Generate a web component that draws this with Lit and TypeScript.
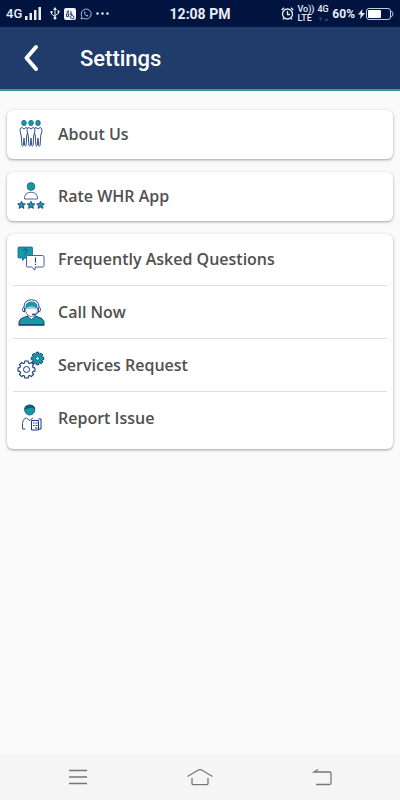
import { LitElement, html, css, svg } from "lit";
import { customElement, property } from "lit/decorators.js";

const star = (x: number) => svg`
  <path transform="translate(${x} 23)" fill="#149aa5" stroke="#14397c" stroke-width=".8" stroke-linejoin="round"
    d="M0-3.8L1.2-1.4L3.9-1.1L1.9.8L2.4 3.4L0 2.1L-2.4 3.4L-1.9.8L-3.9-1.1L-1.2-1.4Z"/>`;

const gearPath = (r: number, tooth: number) => {
  const points: string[] = [];
  for (let i = 0; i < 8; i++) {
    const base = (i * Math.PI) / 4;
    for (const [offset, radius] of [[-0.28, r], [-0.2, r + tooth], [0.2, r + tooth], [0.28, r]]) {
      points.push(`${(Math.cos(base + offset) * radius).toFixed(2)} ${(Math.sin(base + offset) * radius).toFixed(2)}`);
    }
  }
  return `M${points.join("L")}Z`;
};

const person = (x: number) => svg`
  <ellipse cx="${x}" cy="3" rx="2.3" ry="2.7" fill="#149aa5" stroke="#1b5c86" stroke-width=".7"/>
  <path transform="translate(${x} 0)" fill="#fff" stroke="#1c3f80" stroke-width=".9" stroke-linejoin="round"
    d="M-2 7.500Q-4.300 7.800-4 10.500L-2.700 16L-2.100 25.500Q-1.300 26.800-.7 25.500L0 18L.7 25.500Q1.300 26.800 2.100 25.500L2.700 16L4 10.500Q4.300 7.800 2 7.500L0 9Z"/>`;

const icons = {
  people: svg`${person(7)}${person(21)}${person(14)}`,
  rate: svg`
    <circle cx="14" cy="4.500" r="3.900" fill="#149aa5" stroke="#1b5c86" stroke-width=".7"/>
    <path d="M7.500 17V15.500Q8 10.500 14 10.200Q20 10.500 20.500 15.500V17Z" fill="#fff" stroke="#3a5590" stroke-width=".9"/>
    ${star(4.5)}${star(14)}${star(23.5)}`,
  chat: svg`
    <path d="M2 2H14.500Q15.500 2 15.500 3V12Q15.500 13 14.500 13H8L5.500 15.500V13H2Q1 13 1 12V3Q1 2 2 2Z" fill="#149aa5" stroke="#17658c" stroke-width=".8"/>
    <path d="M6.500 5.500Q6.800 4 8.300 4Q10 4 10 5.600Q10 6.600 8.400 7.300V8.300M8.400 9.500V10.500" fill="none" stroke="#174677" stroke-width="1"/>
    <path d="M10.500 10.500H25.500Q27 10.500 27 12V20.500Q27 22 25.500 22H18V25L14.500 22H10.500Q9.500 22 9.500 21V11.500Q9.500 10.500 10.500 10.500Z" fill="#fff" stroke="#34518f" stroke-width=".9"/>
    <path d="M18.500 12.500V17.500M18.500 18.800V20" stroke="#1c3f80" stroke-width="1.100"/>`,
  agent: svg`
    <path d="M2 27V23.500Q3 20 8 19L11 18L14.500 21L18 18L21 19Q26 20 27 23.500V27Z" fill="#149aa5" stroke="#14397c" stroke-width=".9"/>
    <path d="M11 17V19L14.500 21.500L18 19V17Z" fill="#fff" stroke="#14397c" stroke-width=".8"/>
    <path d="M8.500 10Q8.500 18.500 14.500 18.500Q20.500 18.500 20.500 10Z" fill="#fff" stroke="#34518f" stroke-width=".7"/>
    <path d="M8.500 10.500V8Q9 3.500 14.500 3.500Q20 3.500 20.500 8V10.500Q18 8.500 14.500 8.500Q11 8.500 8.500 10.500Z" fill="#149aa5"/>
    <path d="M7 9Q7 1.800 14.500 1.800Q22 1.800 22 9M7 9Q5.500 9.500 5.500 11.500Q5.500 14 7.500 14V9.500M22 9Q23.500 9.500 23.500 11.500Q23.500 14 21.500 14V9.500M21.500 14Q20.500 16.500 17 16.500" fill="none" stroke="#14397c" stroke-width=".9"/>
    <ellipse cx="16.500" cy="16.300" rx="1.500" ry=".9" fill="#14397c"/>
    <path d="M1.500 27H27.500" stroke="#14397c" stroke-width="1.200"/>`,
  gears: svg`
    <g transform="translate(20.500 7.500)"><path d="${gearPath(4.9, 1.5)}" fill="#149aa5" stroke="#174577" stroke-width="1"/><circle r="1.700" fill="#fff" stroke="#174577" stroke-width=".8"/></g>
    <g transform="translate(9.500 18.500)"><path d="${gearPath(6.8, 1.8)}" fill="#fff" stroke="#14397c" stroke-width="1.100" stroke-linejoin="round"/><circle r="3" fill="#fff" stroke="#14397c" stroke-width="1"/></g>`,
  report: svg`
    <circle cx="12.700" cy="6" r="5" fill="#149aa5" stroke="#174577" stroke-width=".8"/>
    <path d="M7 5.500Q7.500.7 12.700.7Q18 .7 18.500 5.500Q15 3 12.700 4Q10 5 7 5.500Z" fill="#18577f"/>
    <path d="M8.500 25H5.500V19.500Q6 14.500 9.500 14L12.500 16.500L16 14" fill="none" stroke="#34518f" stroke-width="1"/>
    <path d="M14.500 16.500H21.500V26H14.500Z M21.500 15H24V25H21.500" fill="#fff" stroke="#14397c" stroke-width="1"/>
    <path d="M16 19H17.500M18.500 19H20.500M16 21.500H17.500M18.500 21.500H20.500M18 24H20.500" stroke="#14397c" stroke-width="1"/>`,
};

type IconName = keyof typeof icons;

@customElement("settings-row")
export class SettingsRow extends LitElement {
  @property() icon: IconName = "people";
  @property() label = "";

  static styles = css`
    :host { display: flex; }
    button {
      flex: 1; display: flex; align-items: center; gap: 13px;
      border: 0; background: none; padding: 0 4px 1px; text-align: left; cursor: pointer;
      color: #505050; font: 640 16px/24px "Open Sans", sans-serif;
    }
    svg { width: 28px; height: 28px; flex: none; }
  `;

  render() {
    return html`<button type="button">
      <svg viewBox="0 0 28 28" aria-hidden="true">${icons[this.icon]}</svg>
      <span>${this.label}</span>
    </button>`;
  }
}

const groups: { icon: IconName; label: string }[][] = [
  [{ icon: "people", label: "About Us" }],
  [{ icon: "rate", label: "Rate WHR App" }],
  [
    { icon: "chat", label: "Frequently Asked Questions" },
    { icon: "agent", label: "Call Now" },
    { icon: "gears", label: "Services Request" },
    { icon: "report", label: "Report Issue" },
  ],
];

@customElement("app-root")
export class AppRoot extends LitElement {
  static styles = css`
    :host {
      display: flex; flex-direction: column; min-height: 100vh;
      background: #fafafa; font-family: Roboto, sans-serif;
    }
    * { box-sizing: border-box; }
    .status {
      display: grid; grid-template-columns: 1fr auto 1fr; align-items: center;
      height: 27px; padding: 0 6px; background: #001440; color: #e9eef8;
    }
    .side { display: flex; align-items: center; gap: 4px; }
    .right { justify-content: flex-end; gap: 3px; }
    .network { display: flex; align-items: center; gap: 3px; margin-right: 4px; font: 500 13px/16px Roboto, sans-serif; }
    .time { font: 700 14px/16px Roboto, sans-serif; }
    .battery { font: 700 12px/16px Roboto, sans-serif; }
    .power { display: flex; align-items: center; gap: 1px; }
    .stack { display: flex; flex-direction: column; font: 500 9px/9px Roboto, sans-serif; }
    .dim { color: #33456f; font-size: 6px; text-align: center; }
    svg { display: block; flex: none; }
    header {
      display: flex; align-items: center; gap: 34px; height: 64px; padding: 0 16px;
      background: #1f3c6b; border-bottom: 2px solid #45969b; color: #fff;
    }
    h1 { margin: 0; padding-top: 2px; font: 500 22px/28px Roboto, sans-serif; }
    header button, nav button { border: 0; padding: 0; background: none; color: inherit; cursor: pointer; }
    main { flex: 1; display: flex; flex-direction: column; gap: 13px; padding: 19px 7px; }
    .card {
      background: #fff; border-radius: 6px; padding: 0 6px;
      box-shadow: 0 1px 3px rgba(0, 0, 0, 0.36);
    }
    settings-row { height: 49px; }
    .list { padding-bottom: 4px; }
    .list settings-row { height: 53px; }
    .list settings-row:first-child { height: 52px; }
    .list settings-row:not(:last-child) { border-bottom: 1px solid #dfdfdf; }
    nav {
      display: grid; grid-template-columns: repeat(3, 1fr); justify-items: center; align-items: center;
      height: 46px; padding: 0 17px; background: #f5f5f5; color: #777;
    }
  `;

  render() {
    return html`
      <div class="status">
        <div class="side left">
          <span class="network">4G
            <svg width="17" height="13" viewBox="0 0 17 13" fill="currentColor"><path d="M0 9h2.500v4H0zM4.500 6H7v7H4.500zM9 3h2.500v10H9zM13.500 0H16v13h-2.500z"/></svg>
          </span>
          <svg width="10" height="13" viewBox="0 0 10 13" fill="none" stroke="currentColor"><path d="M5 2v9M1.500 5v2L5 9.500M8.500 4.500v2L5 8.500"/><path fill="currentColor" stroke="none" d="M5 0l2 3H3zM.5 4h2v2h-2zM7.500 3.500h2v2h-2z"/><circle cx="5" cy="11" r="1.500" fill="currentColor" stroke="none"/></svg>
          <svg width="12" height="12" viewBox="0 0 12 12"><rect width="12" height="12" rx="2" fill="#f2f5fb"/><path d="M4 2v3.500M2.500 4.500L5 3.500M2.500 6h2v2.500h-2zM7 3v4M5.500 6h3M6 9.500q0-2 2-2t2 2-2 1-2-1" fill="none" stroke="#30426d"/></svg>
          <svg width="12" height="12" viewBox="0 0 12 12" fill="none" stroke="#aeb9d0"><path d="M1 11l.8-2.600A5 5 0 1 1 3.600 10.300z"/><path d="M4 3.500Q3.500 6 6 8q1.500.8 2.500 0L7.300 6.700l-.8.5Q5.500 6.500 5 5.500l.6-.7L5 3.500z" fill="#aeb9d0" stroke="none"/></svg>
          <svg width="13" height="3" viewBox="0 0 13 3" fill="currentColor"><circle cx="1.500" cy="1.500" r="1.200"/><circle cx="6.500" cy="1.500" r="1.200"/><circle cx="11.500" cy="1.500" r="1.200"/></svg>
        </div>
        <span class="time">12:08 PM</span>
        <div class="side right">
          <svg width="13" height="13" viewBox="0 0 13 13" fill="none" stroke="currentColor" stroke-width="1.300"><circle cx="6.500" cy="7" r="5"/><path d="M6.500 4v3.500H9M.7 3L3 .8M12.300 3L10 .8M3 11l-1 1.500M10 11l1 1.500"/></svg>
          <span class="stack"><span>Vo))</span><span>LTE</span></span>
          <span class="stack"><span>4G</span><span class="dim">▼▲</span></span>
          <span class="battery">60%</span>
          <span class="power">
            <svg width="7" height="10" viewBox="0 0 7 10" fill="currentColor"><path d="M4.500 0L0 5.500h2.800L2 10l5-6H4z"/></svg>
            <svg width="28" height="12" viewBox="0 0 28 12"><rect x=".5" y=".5" width="24" height="11" rx="2.500" fill="none" stroke="#c2cbdc"/><path d="M25 3.500q2 0 2 2.500t-2 2.500" fill="none" stroke="#c2cbdc"/><rect x="2" y="2" width="13" height="8" rx="1" fill="#fff"/></svg>
          </span>
        </div>
      </div>
      <header>
        <button type="button" aria-label="Back">
          <svg width="30" height="30" viewBox="0 0 30 30" fill="none" stroke="currentColor" stroke-width="4" stroke-linecap="round" stroke-linejoin="round"><path d="M20 4L10.500 15L20 26"/></svg>
        </button>
        <h1>Settings</h1>
      </header>
      <main>
        ${groups.map(
          (rows) => html`<section class="card ${rows.length > 1 ? "list" : ""}">
            ${rows.map((row) => html`<settings-row .icon=${row.icon} .label=${row.label}></settings-row>`)}
          </section>`
        )}
      </main>
      <nav>
        <button type="button" aria-label="Menu"><svg width="20" height="16" viewBox="0 0 20 16" stroke="currentColor" stroke-width="1.400"><path d="M1 1.500h18M1 8h18M1 14.500h18"/></svg></button>
        <button type="button" aria-label="Home"><svg width="28" height="18" viewBox="0 0 28 18" fill="none" stroke="currentColor" stroke-width="1.300"><path d="M1.500 8.500L12 2.200q2-1 4 0L26.500 8.500M6 10v5.500q0 1.200 1.200 1.200h13.600q1.200 0 1.200-1.200V10"/></svg></button>
        <button type="button" aria-label="Previous"><svg width="20" height="18" viewBox="0 0 20 18" fill="none" stroke="currentColor" stroke-width="1.300"><path d="M6 1.500L2 4h15.500q1.500 0 1.500 1.500v9.500q0 1.500-1.500 1.500H4"/></svg></button>
      </nav>
    `;
  }
}
